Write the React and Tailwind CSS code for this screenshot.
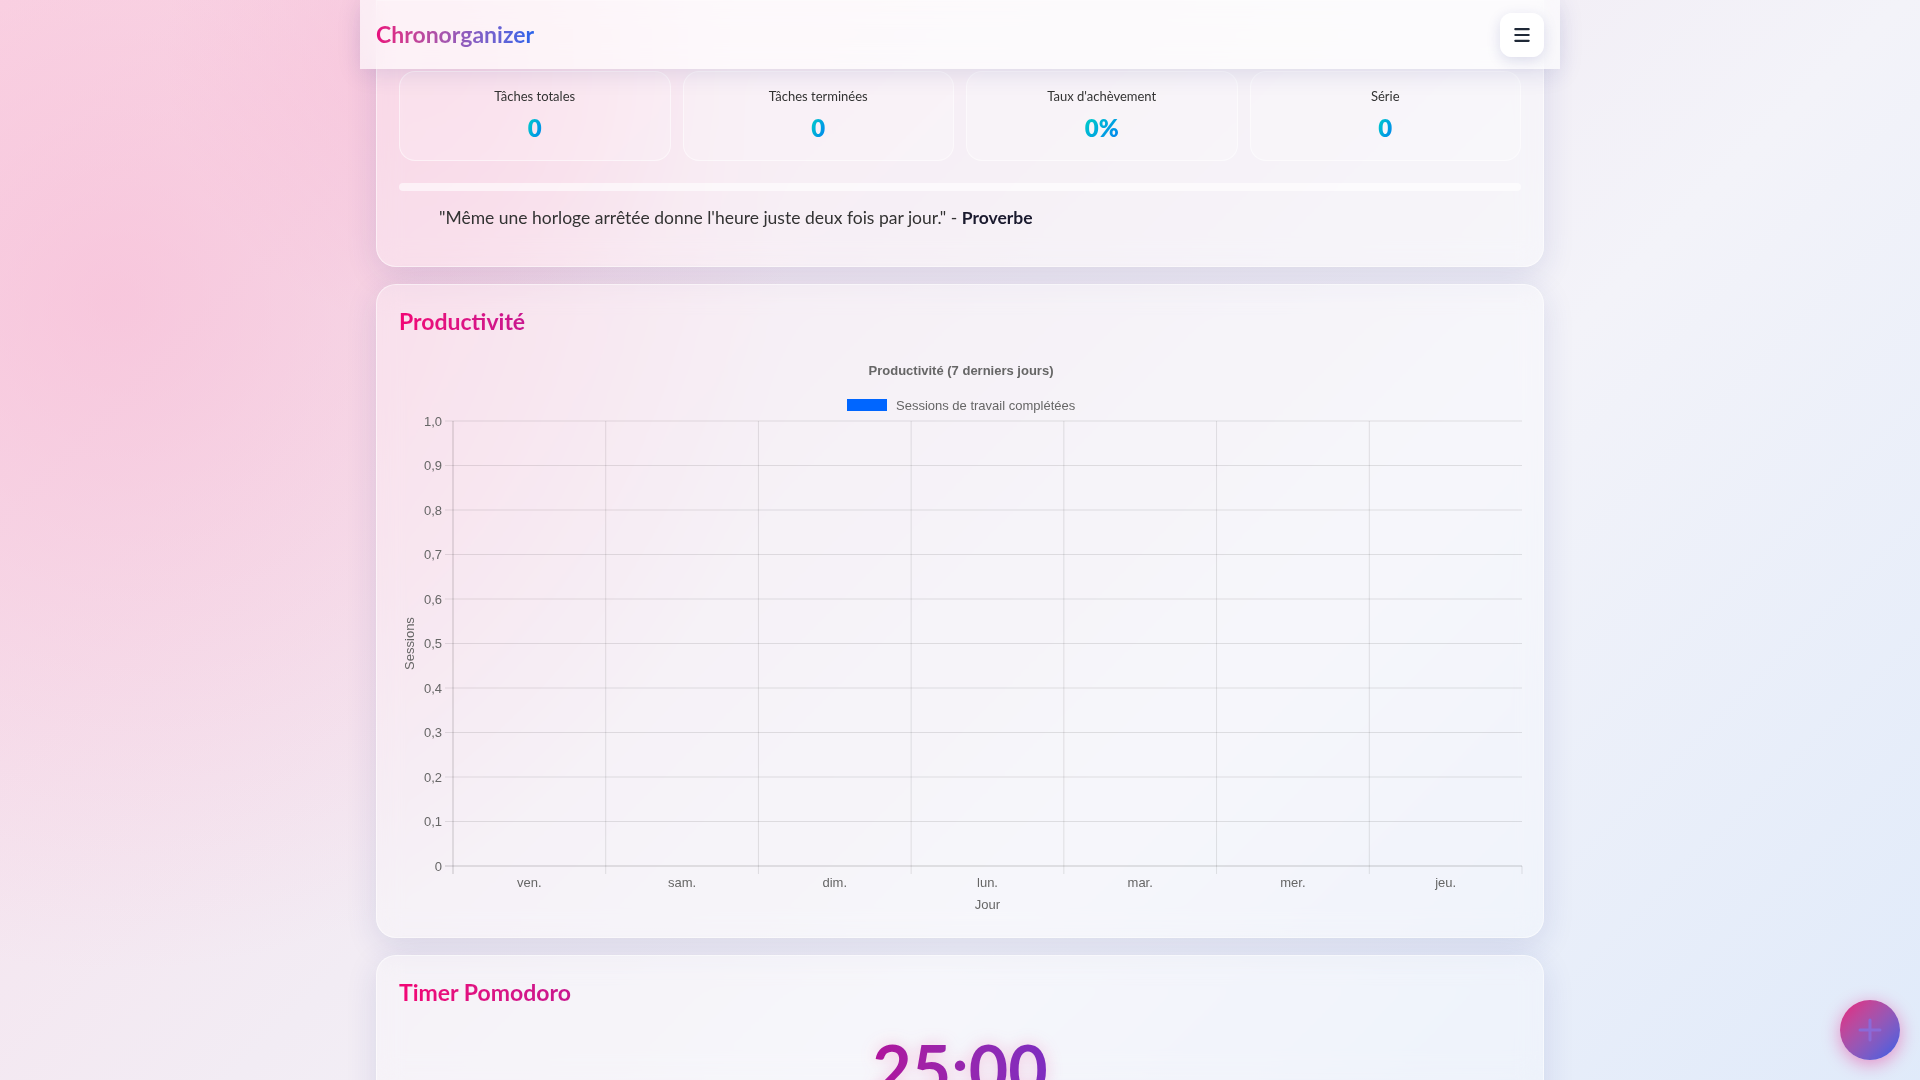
import { Menu } from 'lucide-react';

const STATS = [
  { label: 'Tâches totales', value: '0' },
  { label: 'Tâches terminées', value: '0' },
  { label: "Taux d'achèvement", value: '0%' },
  { label: 'Série', value: '0' },
];

const DAYS = ['ven.', 'sam.', 'dim.', 'lun.', 'mar.', 'mer.', 'jeu.'];
const TICKS = ['1,0', '0,9', '0,8', '0,7', '0,6', '0,5', '0,4', '0,3', '0,2', '0,1', '0'];

function ProductivityChart() {
  const W = 1124;
  const H = 560;
  const left = 54;
  const right = 1123;
  const top = 66;
  const bottom = 511;
  const rowH = (bottom - top) / 10;
  const colW = (right - left) / 7;
  const font = { fontFamily: '"Liberation Sans", Arial, sans-serif', fontSize: 13 };

  return (
    <svg width={W} height={H} viewBox={`0 0 ${W} ${H}`} className="block">
      <text x={W / 2} y={20} textAnchor="middle" fill="#666" fontWeight="bold" style={font}>
        Productivité (7 derniers jours)
      </text>
      <rect x={448} y={44} width={40} height={12} fill="#0066ff" />
      <text x={497} y={55} fill="#666" style={font}>Sessions de travail complétées</text>

      {TICKS.map((t, i) => {
        const y = top + i * rowH;
        return (
          <g key={t}>
            <line x1={left - 8} x2={right} y1={y} y2={y} stroke={i === 10 ? 'rgba(0,0,0,0.2)' : 'rgba(0,0,0,0.1)'} />
            <text x={43} y={y + 4.5} textAnchor="end" fill="#666" style={font}>{t}</text>
          </g>
        );
      })}

      {DAYS.map((d, i) => {
        const x = left + i * colW;
        return (
          <g key={d}>
            <line x1={x} x2={x} y1={top} y2={bottom + 8} stroke={i === 0 ? 'rgba(0,0,0,0.2)' : 'rgba(0,0,0,0.1)'} />
            <text x={x + colW / 2} y={532} textAnchor="middle" fill="#666" style={font}>{d}</text>
          </g>
        );
      })}
      <line x1={right} x2={right} y1={bottom} y2={bottom + 8} stroke="rgba(0,0,0,0.1)" />

      <text
        x={15}
        y={(top + bottom) / 2}
        textAnchor="middle"
        fill="#666"
        transform={`rotate(-90 15 ${(top + bottom) / 2})`}
        style={font}
      >
        Sessions
      </text>
      <text x={(left + right) / 2} y={554} textAnchor="middle" fill="#666" style={font}>Jour</text>
    </svg>
  );
}

function Card({ className = '', children }) {
  return (
    <section
      className={`rounded-[20px] border border-white/50 bg-white/30 px-[22px] pb-[22px] shadow-[0_8px_32px_rgba(31,38,135,0.12)] backdrop-blur-md ${className}`}
    >
      {children}
    </section>
  );
}

function Heading({ children }) {
  return (
    <h2 className="inline-block bg-gradient-to-r from-[#f20575] to-[#c8168f] bg-clip-text text-[23px] font-bold leading-[28px] text-transparent">
      {children}
    </h2>
  );
}

export default function App() {
  return (
    <div
      className="min-h-screen bg-[radial-gradient(circle_at_6%_22%,rgba(247,178,208,0.55),transparent_32%),radial-gradient(circle_at_23%_4%,rgba(247,186,214,0.5),transparent_14%),linear-gradient(135deg,#fadbe8_0%,#f2ecf4_40%,#f3f3f9_58%,#dbe8fa_100%)]"
      style={{ fontFamily: 'Lato, "Noto Sans", sans-serif' }}
    >
      <header className="fixed inset-x-0 top-0 z-20 mx-auto flex h-[69px] w-[1200px] items-center justify-between bg-white/65 px-4 shadow-[0_4px_24px_rgba(31,38,135,0.12)] backdrop-blur-md">
        <span className="bg-gradient-to-r from-[#e8057c] to-[#2563eb] bg-clip-text text-[23px] font-bold text-transparent">
          Chronorganizer
        </span>
        <button className="flex h-11 w-11 items-center justify-center rounded-xl bg-white/90 shadow-[0_4px_14px_rgba(31,38,135,0.15)]">
          <Menu size={20} strokeWidth={2.6} color="#1f2937" />
        </button>
      </header>

      <main className="mx-auto flex w-[1200px] flex-col gap-[17px] px-4">
        <Card className="rounded-t-none pt-[70px]">
          <div className="grid grid-cols-4 gap-3">
            {STATS.map((s) => (
              <div key={s.label} className="flex flex-col items-center rounded-2xl border border-white/50 bg-white/20 pb-4 pt-[14px]">
                <span className="text-[13px] leading-5 text-[#333]">{s.label}</span>
                <span className="mt-[6px] inline-block bg-gradient-to-br from-[#12d6c0] to-[#1677f2] bg-clip-text text-2xl font-extrabold leading-8 text-transparent">
                  {s.value}
                </span>
              </div>
            ))}
          </div>
          <div className="mt-[22px] h-2 rounded-full bg-white/60" />
          <p className="pb-[14px] pl-10 pt-[15px] text-[17.5px] leading-6 text-[#333]">
            "Même une horloge arrêtée donne l'heure juste deux fois par jour." - <strong className="text-[#1a1a2e]">Proverbe</strong>
          </p>
        </Card>

        <Card className="pt-[22px]">
          <Heading>Productivité</Heading>
          <div className="mt-[19px]">
            <ProductivityChart />
          </div>
        </Card>

        <Card className="pt-[22px]">
          <Heading>Timer Pomodoro</Heading>
          <div className="mt-7 flex justify-center">
            <span className="inline-block bg-gradient-to-r from-[#b0119c] to-[#7e2cc0] bg-clip-text text-[68px] font-bold leading-none text-transparent drop-shadow-[0_0_8px_rgba(236,72,153,0.3)]">
              25:00
            </span>
          </div>
          <div className="mt-8 flex justify-center gap-4">
            <button className="rounded-full bg-gradient-to-r from-[#e8057c] to-[#2563eb] px-8 py-3 font-bold text-white">Démarrer</button>
            <button className="rounded-full bg-white/60 px-8 py-3 font-bold text-[#333]">Réinitialiser</button>
          </div>
          <div className="h-40" />
        </Card>
      </main>

      <button className="fixed bottom-5 right-5 z-30 flex h-[60px] w-[60px] items-center justify-center rounded-full bg-gradient-to-br from-[#ea067a] to-[#2b5ce8] shadow-[0_4px_18px_rgba(236,0,122,0.4)]">
        <svg width="26" height="26" viewBox="0 0 26 26">
          <path d="M13 3v20M3 13h20" stroke="#8a6ad8" strokeWidth="3" strokeLinecap="round" />
        </svg>
      </button>
    </div>
  );
}
